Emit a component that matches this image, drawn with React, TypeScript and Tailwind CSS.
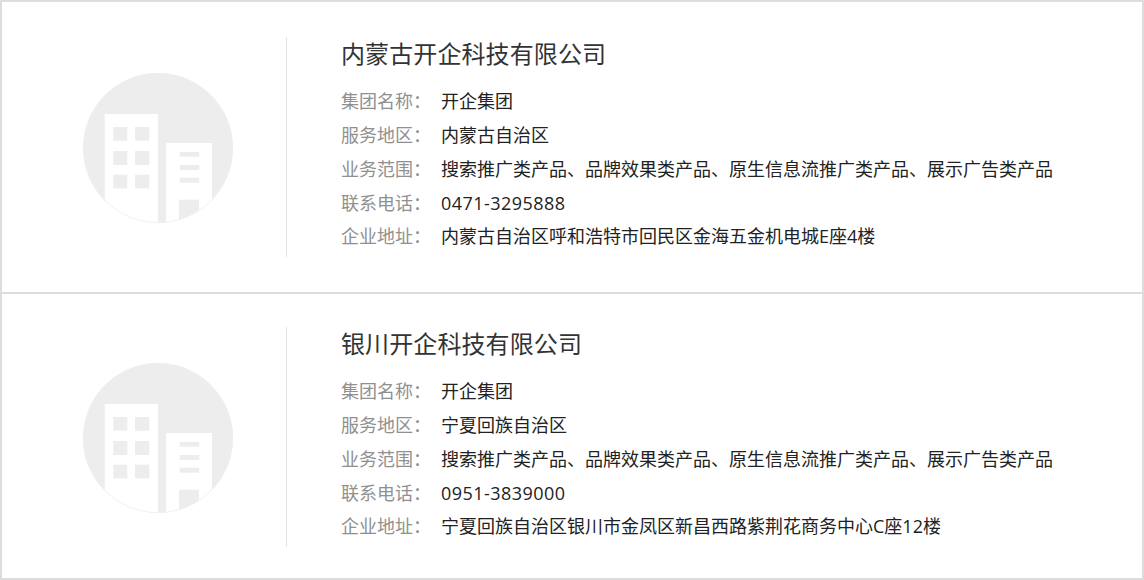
const companies = [
  {
    name: '内蒙古开企科技有限公司',
    region: '内蒙古自治区',
    phone: '0471-3295888',
    address: '内蒙古自治区呼和浩特市回民区金海五金机电城E座4楼',
  },
  {
    name: '银川开企科技有限公司',
    region: '宁夏回族自治区',
    phone: '0951-3839000',
    address: '宁夏回族自治区银川市金凤区新昌西路紫荆花商务中心C座12楼',
  },
];

function BuildingLogo({ id }: { id: string }) {
  return (
    <svg width="150" height="150" viewBox="0 0 150 150" className="block shrink-0">
      <defs>
        <clipPath id={id}>
          <circle cx="75" cy="75" r="75" />
        </clipPath>
      </defs>
      <circle cx="75" cy="75" r="75" fill="#ededed" />
      <g clipPath={`url(#${id})`}>
        <rect x="21.7" y="41" width="53.3" height="109" fill="#fff" />
        <rect x="83" y="70" width="46" height="80" fill="#fff" />
        <g fill="#ededed">
          <rect x="30.3" y="54" width="14" height="13.7" />
          <rect x="52" y="54" width="14.3" height="13.7" />
          <rect x="30.3" y="78" width="14" height="14" />
          <rect x="52" y="78" width="14.3" height="14" />
          <rect x="30.3" y="101.7" width="14" height="13.7" />
          <rect x="52" y="101.7" width="14.3" height="13.7" />
          <rect x="96.7" y="79" width="19.6" height="4.7" />
          <rect x="96.7" y="92" width="19.6" height="5" />
          <rect x="96.7" y="104.7" width="19.6" height="5" />
          <rect x="96" y="126.7" width="20" height="24" />
        </g>
      </g>
      <circle cx="75" cy="75" r="74.6" fill="none" stroke="#efefef" strokeWidth="0.8" />
    </svg>
  );
}

function Row({ label, children }: { label: string; children: React.ReactNode }) {
  return (
    <div className="flex h-[33.75px] items-center text-[18px]">
      <span className="w-[100px] shrink-0 text-[#909090]">{label}</span>
      <span className="text-[#222]">{children}</span>
    </div>
  );
}

export default function App() {
  return (
    <div
      className="h-[580px] w-[1144px] overflow-hidden border-2 border-[#ddd] bg-white"
      style={{ fontFamily: '"Open Sans", "Noto Sans CJK SC", "Liberation Sans", sans-serif' }}
    >
      {companies.map((c, i) => (
        <div
          key={c.name}
          className={i > 0 ? 'flex h-[286px] items-start border-t-2 border-[#ddd] pt-[33px]' : 'flex h-[290px] items-start pt-[35px]'}
        >
          <div className="w-[284px] shrink-0 pt-[36px] pl-[81px]">
            <BuildingLogo id={`clip-${i}`} />
          </div>
          <div className="h-[220px] border-l border-[#e5e5e5] pl-[54px]">
            <h3 className="mt-[1px] mb-[15px] h-[32px] text-[24px] leading-[32px] font-normal tracking-[0.1px] text-[#333]">{c.name}</h3>
            <Row label="集团名称：">开企集团</Row>
            <Row label="服务地区：">{c.region}</Row>
            <Row label="业务范围：">搜索推广类产品、品牌效果类产品、原生信息流推广类产品、展示广告类产品</Row>
            <Row label="联系电话：">
              <span className="tracking-[0.45px]">{c.phone}</span>
            </Row>
            <Row label="企业地址：">{c.address}</Row>
          </div>
        </div>
      ))}
    </div>
  );
}
